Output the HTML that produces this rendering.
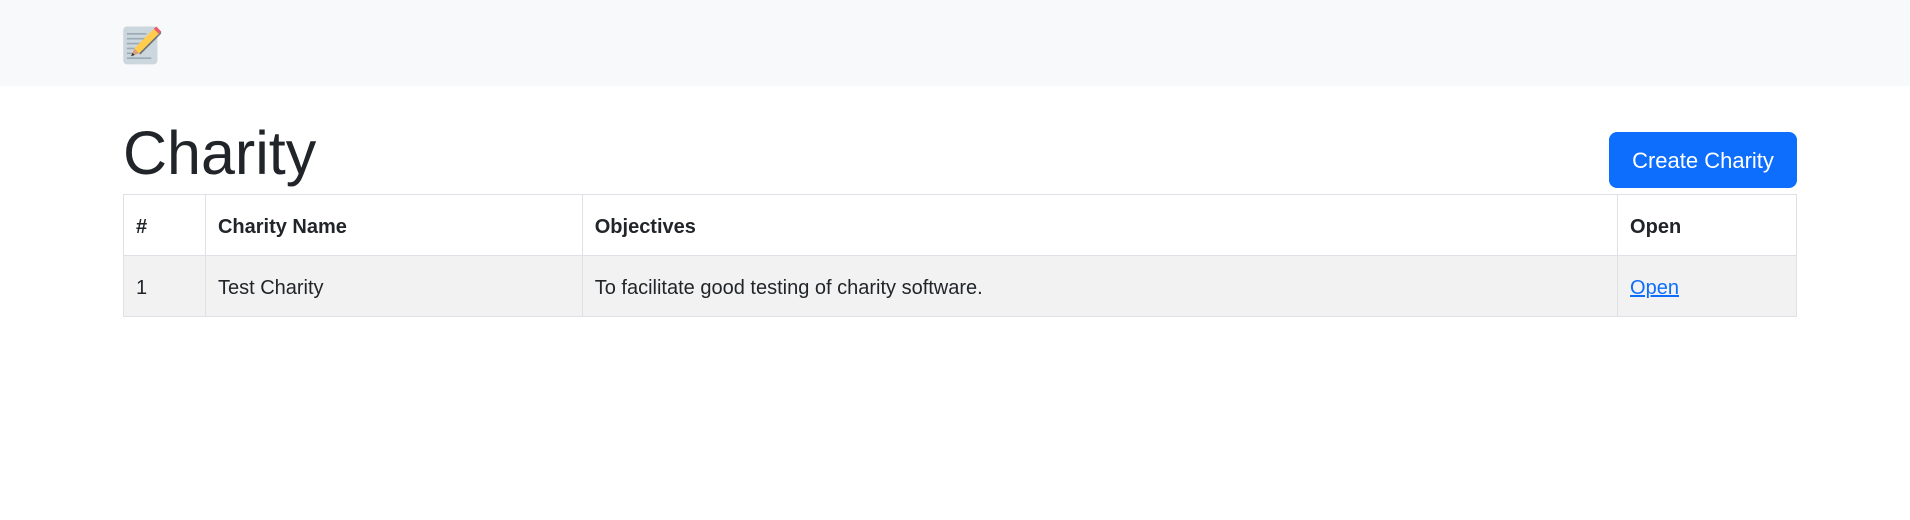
<!DOCTYPE html>
<html><head><meta charset="utf-8"><style>
*{box-sizing:border-box;margin:0;padding:0}
body{width:1910px;height:520px;background:#fff;font-family:"Liberation Sans",sans-serif;color:#212529;position:relative;overflow:hidden}
.nav{position:absolute;left:0;top:0;width:1910px;height:86px;background:#f8f9fa}
.icon{position:absolute;left:122px;top:24px}
h1{position:absolute;left:123px;top:117px;font-size:61px;font-weight:400;line-height:72px}
.btn{position:absolute;left:1609px;top:132px;width:188px;height:56px;background:#0d6efd;color:#fff;border-radius:8px;font-size:22px;line-height:58px;text-align:center}
table{position:absolute;left:123px;top:194px;width:1674px;border-collapse:collapse;font-size:20px}
td,th{border:1.5px solid #dee2e6;padding:5px 12px 0;text-align:left;height:61px}
th{font-weight:700}
tr.r td{background:#f2f2f2}
a{color:#0d6efd}
</style></head><body>
<div class="nav"><svg class="icon" width="44" height="44" viewBox="0 0 36 36">
<rect x="1" y="2" width="28" height="31" rx="3" fill="#ccd6dd"/>
<g stroke="#99aab5" stroke-width="1.3"><line x1="4" y1="8" x2="20" y2="8"/><line x1="4" y1="12" x2="20" y2="12"/><line x1="4" y1="16" x2="16" y2="16"/><line x1="4" y1="20" x2="12" y2="20"/><line x1="4" y1="24" x2="10" y2="24"/><line x1="4" y1="28" x2="24" y2="28"/></g>
<path d="M28 2l4 4-18 18-6 2 2-6z" fill="#ffcc4d"/>
<path d="M28 2l4 4-2 2-4-4z" fill="#ea596e"/>
<path d="M10 20l4 4-6 2z" fill="#d99e82"/>
<path d="M8.6 23.6l1.8 1.8-3 1z" fill="#292f33"/>
<path d="M14 24l18-18 0 2-17 17z" fill="#292f33" opacity=".6"/>
</svg></div>
<h1>Charity</h1>
<div class="btn">Create Charity</div>
<table>
<colgroup><col style="width:82px"><col style="width:377px"><col style="width:1036px"><col style="width:179px"></colgroup>
<tr><th>#</th><th>Charity Name</th><th>Objectives</th><th>Open</th></tr>
<tr class="r"><td>1</td><td>Test Charity</td><td>To facilitate good testing of charity software.</td><td><a href="#">Open</a></td></tr>
</table>
</body></html>
